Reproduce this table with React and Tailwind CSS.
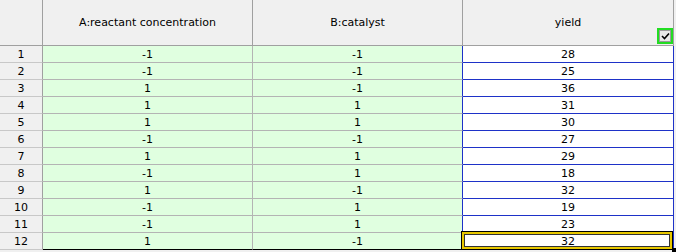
const rows = [
  [-1, -1, 28],
  [-1, -1, 25],
  [1, -1, 36],
  [1, 1, 31],
  [1, 1, 30],
  [-1, -1, 27],
  [1, 1, 29],
  [-1, 1, 18],
  [1, -1, 32],
  [-1, 1, 19],
  [-1, 1, 23],
  [1, -1, 32],
]

export default function App() {
  return (
    <div
      className="w-[676px] h-[252px] bg-[#f0f0f0] text-black text-[11px] leading-none overflow-hidden"
      style={{ fontFamily: '"DejaVu Sans", Verdana, sans-serif' }}
    >
      {/* Header */}
      <div className="flex h-[46px]">
        <div className="w-[43px] border-r border-b border-[#a0a0a0]" />
        <div className="w-[210px] flex items-center justify-center border-r border-b border-[#a0a0a0]">
          A:reactant concentration
        </div>
        <div className="w-[210px] flex items-center justify-center border-r border-b border-[#a0a0a0]">
          B:catalyst
        </div>
        <div className="relative w-[211px] flex items-center justify-center border-r border-b border-[#a0a0a0]">
          yield
          <div className="absolute left-[194px] top-[28px] w-[16px] h-[16px] border-2 border-[#22dd22] bg-[#f0f0f0] flex items-center justify-center">
            <div className="w-[12px] h-[12px] border border-[#9a9a9a] bg-[#e8e8e8] flex items-center justify-center">
              <svg width="9" height="8" viewBox="0 0 9 8">
                <path d="M1 4 L3.5 6.5 L8 1.5" fill="none" stroke="#000" strokeWidth="1.6" />
              </svg>
            </div>
          </div>
        </div>
      </div>

      {/* Rows */}
      {rows.map((r, i) => {
        const last = i === rows.length - 1
        return (
          <div key={i} className="flex h-[17px]">
            <div className="w-[43px] flex items-center justify-center border-r border-b border-r-[#a0a0a0] border-b-[#c8c8c8]">
              {i + 1}
            </div>
            <div className={`w-[210px] flex items-center justify-center bg-[#e0ffe0] border-r border-b border-r-[#b4b4b4] ${last ? 'border-b-black' : 'border-b-[#b4b4b4]'}`}>
              {r[0]}
            </div>
            <div className={`w-[210px] flex items-center justify-center bg-[#e0ffe0] border-r border-b border-r-[#1e32c8] ${last ? 'border-b-black' : 'border-b-[#b4b4b4]'}`}>
              {r[1]}
            </div>
            <div className={`relative w-[211px] flex items-center justify-center bg-white border-r border-b border-r-[#1e32c8] ${last ? 'border-b-black' : 'border-b-[#1e32c8]'}`}>
              {r[2]}
              {last && (
                <>
                  <div className="absolute left-[-2px] top-[-2px] w-[212px] h-[19px] border border-black" />
                  <div className="absolute left-[-1px] top-[-1px] w-[210px] h-[17px] border-2 border-[#e8c800]" />
                  <div className="absolute left-[1px] top-[1px] w-[206px] h-[13px] border border-[#333]" />
                  <div className="absolute right-[-3px] bottom-[-3px] w-[4px] h-[4px] bg-black" />
                </>
              )}
            </div>
          </div>
        )
      })}
    </div>
  )
}
